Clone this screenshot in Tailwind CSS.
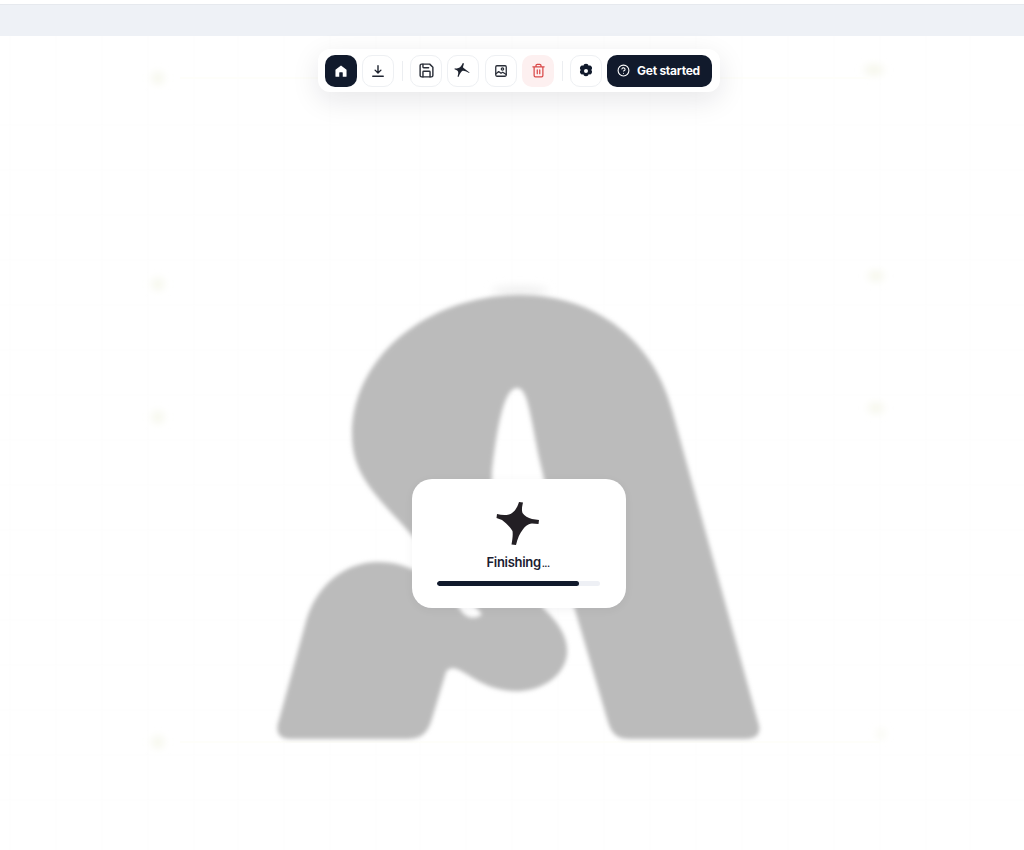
<!DOCTYPE html>
<html>
<head>
<meta charset="utf-8">
<script src="https://cdn.jsdelivr.net/npm/@tailwindcss/browser@4"></script>
</head>
<body class="font-['Inter',sans-serif] bg-white">
<div class="relative w-[1024px] h-[850px] overflow-hidden bg-white flex flex-col">
  <div class="h-1 bg-white shrink-0"></div>
  <div class="h-8 shrink-0 bg-[#eef1f6] border-t border-[#e6e9ee]"></div>

  <div class="relative flex-1">
    <svg class="absolute inset-0" width="1024" height="814" viewBox="0 36 1024 814" fill="none">
      <defs>
        <filter id="b1" x="-10%" y="-10%" width="120%" height="120%"><feGaussianBlur stdDeviation="2.200"/></filter>
        <filter id="b2" x="-100%" y="-100%" width="300%" height="300%"><feGaussianBlur stdDeviation="4"/></filter>
      </defs>
      <g stroke="#fdfdfd" stroke-width="1">
        <path d="M10 36V850M56 36V850M102 36V850M148 36V850M194 36V850M238 36V850M284 36V850M330 36V850M376 36V850M420 36V850M466 36V850M512 36V850M558 36V850M604 36V850M650 36V850M696 36V850M742 36V850M788 36V850M834 36V850M880 36V850M926 36V850M970 36V850"/>
        <path d="M0 125H1024M0 170H1024M0 215H1024M0 260H1024M0 305H1024M0 350H1024M0 395H1024M0 440H1024M0 485H1024M0 530H1024M0 575H1024M0 620H1024M0 665H1024M0 710H1024M0 755H1024M0 800H1024"/>
      </g>
      <g fill="#f5f6ea" filter="url(#b2)">
        <ellipse cx="158" cy="78" rx="6" ry="6"/>
        <ellipse cx="874" cy="70" rx="10" ry="5"/>
        <ellipse cx="158" cy="284" rx="6" ry="6"/>
        <ellipse cx="876" cy="276" rx="8" ry="5"/>
        <ellipse cx="158" cy="417" rx="6" ry="6"/>
        <ellipse cx="876" cy="408" rx="8" ry="5"/>
        <ellipse cx="158" cy="742" rx="6" ry="6"/>
        <ellipse cx="881" cy="734" rx="3" ry="5"/>
      </g>
      <path d="M180 78H870M180 742H880" stroke="#fefefa" stroke-width="2"/>
      <ellipse cx="520" cy="291" rx="28" ry="5" fill="#efefef" filter="url(#b2)"/>
      <path filter="url(#b1)" fill="#bbbbbb" d="M758 722 C762 733 757 739 745 739 L630 739 C618 739 612 735 608 722 L575 610 L540 462 C530 415 528 388 517 388 C505 388 498 420 492 470 L490 540 L545 610 C572 635 573 660 555 677 C535 695 505 695 480 682 C465 674 452 662 446 672 L431 722 C426 735 420 739 405 739 L290 739 C278 739 275 731 279 720 L305 625 C315 585 345 562 378 562 C410 562 440 580 462 612 C466 618 476 620 482 614 L400 522 C370 490 352 470 352 435 C352 355 430 295 520 295 C600 295 655 345 672 410 Z"/>
    </svg>
  </div>

  <div class="absolute left-[318px] top-[49px] w-[402px] h-[43px] bg-white rounded-xl shadow-[0_8px_28px_rgba(15,23,42,0.10)] flex items-center pl-[7px] text-[#1f2430]">
    <div class="w-8 h-8 rounded-[10px] bg-[#111a2c] flex items-center justify-center">
      <svg width="14" height="14" viewBox="0 0 24 24" fill="#fff"><path d="M12 2.500 2.500 10v11a1 1 0 0 0 1 1H9v-7a1 1 0 0 1 1-1h4a1 1 0 0 1 1 1v7h5.500a1 1 0 0 0 1-1V10z"/></svg>
    </div>
    <div class="ml-[5px] w-8 h-8 rounded-[10px] border border-[#eef0f3] flex items-center justify-center">
      <svg width="14" height="14" viewBox="0 0 24 24" fill="none" stroke="#1f2430" stroke-width="2.400" stroke-linecap="round" stroke-linejoin="round"><path d="M12 3v12M7 10.500l5 5 5-5M3 21h18"/></svg>
    </div>
    <div class="ml-2 w-px h-5 bg-[#eceef1]"></div>
    <div class="ml-[7px] w-8 h-8 rounded-[10px] border border-[#eef0f3] flex items-center justify-center">
      <svg width="17" height="17" viewBox="0 0 24 24" fill="none" stroke="#2a2e38" stroke-width="2" stroke-linecap="round" stroke-linejoin="round"><path d="M5 3h11.500L21 7.500V19a2 2 0 0 1-2 2H5a2 2 0 0 1-2-2V5a2 2 0 0 1 2-2z"/><path d="M17 21v-7a1 1 0 0 0-1-1H8a1 1 0 0 0-1 1v7M7 3v4a1 1 0 0 0 1 1h7"/></svg>
    </div>
    <div class="ml-[5px] w-8 h-8 rounded-[10px] border border-[#eef0f3] flex items-center justify-center">
      <svg class="mr-[3px] mb-[2px]" width="16" height="16" viewBox="0 0 16 16" fill="#1f2430"><path d="M8.800 1 10 1.500 8.900 5.300C9.500 6 11.500 7.600 15.500 10.500L15.200 11C11.500 9 9.700 8.300 8.600 8.800 7.300 9.500 6 11.500 4.500 15L3.500 14.500C4.300 12 4.500 10.500 4 9.400 3.500 8.500 2.300 7.800 .5 7.300L.8 6.200C3 6.700 4.500 6.400 5.600 5.600 6.800 4.700 7.800 3 8.800 1Z"/></svg>
    </div>
    <div class="ml-[6px] w-8 h-8 rounded-[10px] border border-[#eef0f3] flex items-center justify-center">
      <svg width="14" height="14" viewBox="0 0 24 24" fill="none" stroke="#2a2e38" stroke-width="2.200" stroke-linecap="round" stroke-linejoin="round"><rect x="3" y="3" width="18" height="18" rx="2"/><circle cx="14.500" cy="8.500" r="2"/><path d="m3 17 5-4 4 3 3-2 6 4"/></svg>
    </div>
    <div class="ml-[5px] w-8 h-8 rounded-[10px] bg-[#fdf0f0] flex items-center justify-center">
      <svg width="15" height="15" viewBox="0 0 24 24" fill="none" stroke="#d94848" stroke-width="2" stroke-linecap="round" stroke-linejoin="round"><path d="M3 6h18M19 6v14a2 2 0 0 1-2 2H7a2 2 0 0 1-2-2V6M8 6V4a2 2 0 0 1 2-2h4a2 2 0 0 1 2 2v2M10 11v6M14 11v6"/></svg>
    </div>
    <div class="ml-2 w-px h-5 bg-[#eceef1]"></div>
    <div class="ml-[7px] w-8 h-8 rounded-[10px] border border-[#eef0f3] flex items-center justify-center">
      <svg width="16" height="16" viewBox="0 0 24 24"><path fill-rule="evenodd" fill="#111a2c" d="M12 1c2.500 0 3.500 1.300 4 3 1.800-.5 3.500 0 4.500 1.700s.6 3.500-.6 4.800c1.200 1.300 1.600 3 .6 4.800s-2.700 2.200-4.500 1.700c-.5 1.700-1.500 3-4 3s-3.500-1.300-4-3c-1.800.5-3.500 0-4.500-1.700s-.6-3.500.6-4.800C2.900 9.200 2.500 7.500 3.500 5.700S6.200 3.500 8 4C8.500 2.300 9.500 1 12 1zM12 9a3 3 0 1 0 0 6 3 3 0 0 0 0-6z"/></svg>
    </div>
    <div class="ml-[5px] w-[105px] h-8 rounded-[10px] bg-[#111a2c] flex items-center pl-[10px] gap-[7px] text-white">
      <svg width="13" height="13" viewBox="0 0 24 24" fill="none" stroke="#fff" stroke-width="2" stroke-linecap="round" stroke-linejoin="round"><circle cx="12" cy="12" r="10"/><path d="M9.100 9a3 3 0 0 1 5.800 1c0 2-3 3-3 3M12 17h.01"/></svg>
      <span class="text-xs font-bold tracking-[-0.25px] whitespace-nowrap">Get started</span>
    </div>
  </div>

  <div class="absolute left-[412px] top-[479px] w-[214px] h-[129px] bg-white rounded-[20px] shadow-[0_2px_10px_rgba(15,23,42,0.05)] flex flex-col items-center pt-[22px]">
    <svg class="mr-[2px]" width="44" height="44" viewBox="0 0 44 44" fill="#231f24"><path d="M23 1 L27 1.500 C26 6 25.500 9 26.500 12 C28.500 15 32 17 36 18 L43 19 L42.500 23 L36 22.500 C31.500 23 28.500 26 26.500 29 C24 32 21.500 37 20 44 L15.500 43.500 C16.500 38 17 34 16.500 30 C14 26 10 22 6 19 L.5 17 L1 13 C5 14 9 14.500 13 13.500 C17 12.500 21 8 23 1Z"/></svg>
    <div class="mt-[7px] mr-[2px] h-5 leading-5 text-[13px] font-semibold text-[#1a2030] tracking-[-0.3px]">Finishing<span class="text-[10px] tracking-[-0.6px] ml-[1px]">...</span></div>
    <div class="mt-[9px] mr-[2px] w-[163px] h-[5px] rounded-full bg-[#eef0f5] overflow-hidden">
      <div class="w-[142px] h-full rounded-full bg-[#111a2c]"></div>
    </div>
  </div>
</div>
</body>
</html>
